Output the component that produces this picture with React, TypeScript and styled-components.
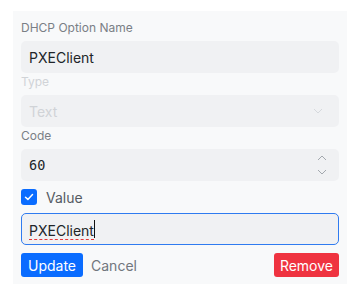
import React, { useState } from 'react';
import styled, { createGlobalStyle } from 'styled-components';

const GlobalStyle = createGlobalStyle`
  body {
    margin: 0;
    background: #ffffff;
    font-family: Inter, "Liberation Sans", sans-serif;
  }
`;

const Page = styled.div`
  padding: 11px 7px 5px 13px;
`;

const Panel = styled.div`
  background: #f8f9fa;
  padding: 8px 8px 7px 8px;
  display: flex;
  flex-direction: column;
`;

const Label = styled.div<{ disabled?: boolean }>`
  font-size: 12px;
  line-height: 18px;
  color: ${p => (p.disabled ? '#d0d3d7' : '#7a7f86')};
  margin-bottom: 4px;
`;

const Field = styled.div`
  position: relative;
  height: 32px;
  box-sizing: border-box;
  background: #f0f1f3;
  border-radius: 5px;
  display: flex;
  align-items: center;
  padding: 0 8px;
`;

const TextInput = styled.input<{ mono?: boolean }>`
  flex: 1;
  border: none;
  background: transparent;
  outline: none;
  padding: 0;
  font-size: ${p => (p.mono ? '13.5px' : '14px')};
  color: #212529;
  font-family: ${p => (p.mono ? '"DejaVu Sans Mono", monospace' : 'Inter, "Liberation Sans", sans-serif')};
`;

const SelectText = styled.span`
  flex: 1;
  font-size: 14px;
  color: #d0d3d7;
`;

const IconSlot = styled.span<{ right: number }>`
  display: flex;
  flex-direction: column;
  gap: 8px;
  margin-right: ${p => p.right}px;
`;

const FocusField = styled(Field)`
  border: 1px solid #2f7bf0;
  padding: 0 7px;
  margin-bottom: 8px;
`;

const Typed = styled.span`
  font-size: 14px;
  line-height: 17px;
  color: #212529;
  padding-top: 3px;
  border-bottom: 1px dashed #e5383b;
`;

const Caret = styled.span`
  display: inline-block;
  width: 1px;
  height: 18px;
  background: #111;
`;

const CheckRow = styled.label`
  display: flex;
  align-items: center;
  gap: 9px;
  margin: 8px 0;
  font-size: 14px;
  color: #555b63;
  height: 16px;
`;

const Box = styled.span`
  width: 16px;
  height: 16px;
  border-radius: 3px;
  background: #0a6cff;
  display: flex;
  align-items: center;
  justify-content: center;
`;

const Actions = styled.div`
  display: flex;
  align-items: center;
  gap: 6px;
`;

const Btn = styled.button<{ tone: 'primary' | 'danger' | 'link' }>`
  height: 24px;
  border: none;
  border-radius: 3px;
  padding: ${p => (p.tone === 'link' ? '0 2px' : p.tone === 'danger' ? '0 6px' : '0 7px')};
  font-size: 14px;
  font-family: Inter, "Liberation Sans", sans-serif;
  cursor: pointer;
  background: ${p => (p.tone === 'primary' ? '#0a6cff' : p.tone === 'danger' ? '#ef3340' : 'transparent')};
  color: ${p => (p.tone === 'link' ? '#71767d' : '#ffffff')};
  ${p => (p.tone === 'danger' ? 'margin-left: auto;' : '')}
`;

const Chevron = ({ up, color }: { up?: boolean; color: string }) => (
  <svg width="10" height="6" viewBox="0 0 10 6">
    <path d={up ? 'M1 5L5 1L9 5' : 'M1 1L5 5L9 1'} fill="none" stroke={color} strokeWidth="1" />
  </svg>
);

export default function App() {
  const [name, setName] = useState('PXEClient');
  const [code, setCode] = useState('60');

  return (
    <>
      <GlobalStyle />
      <Page>
        <Panel>
          <Label>DHCP Option Name</Label>
          <Field>
            <TextInput value={name} onChange={e => setName(e.target.value)} />
          </Field>

          <Label disabled>Type</Label>
          <Field>
            <SelectText>Text</SelectText>
            <IconSlot right={8}>
              <Chevron color="#d6d9dd" />
            </IconSlot>
          </Field>

          <Label>Code</Label>
          <Field>
            <TextInput mono value={code} onChange={e => setCode(e.target.value)} />
            <IconSlot right={4}>
              <Chevron up color="#a3a8ae" />
              <Chevron color="#a3a8ae" />
            </IconSlot>
          </Field>

          <CheckRow>
            <Box>
              <svg width="10" height="8" viewBox="0 0 10 8">
                <path d="M1.5 4.2L3.9 6.4L8.5 1.6" fill="none" stroke="#fff" strokeWidth="1.5" strokeLinecap="round" strokeLinejoin="round" />
              </svg>
            </Box>
            Value
          </CheckRow>

          <FocusField>
            <Typed>PXEClient</Typed>
            <Caret />
          </FocusField>

          <Actions>
            <Btn tone="primary">Update</Btn>
            <Btn tone="link">Cancel</Btn>
            <Btn tone="danger">Remove</Btn>
          </Actions>
        </Panel>
      </Page>
    </>
  );
}
